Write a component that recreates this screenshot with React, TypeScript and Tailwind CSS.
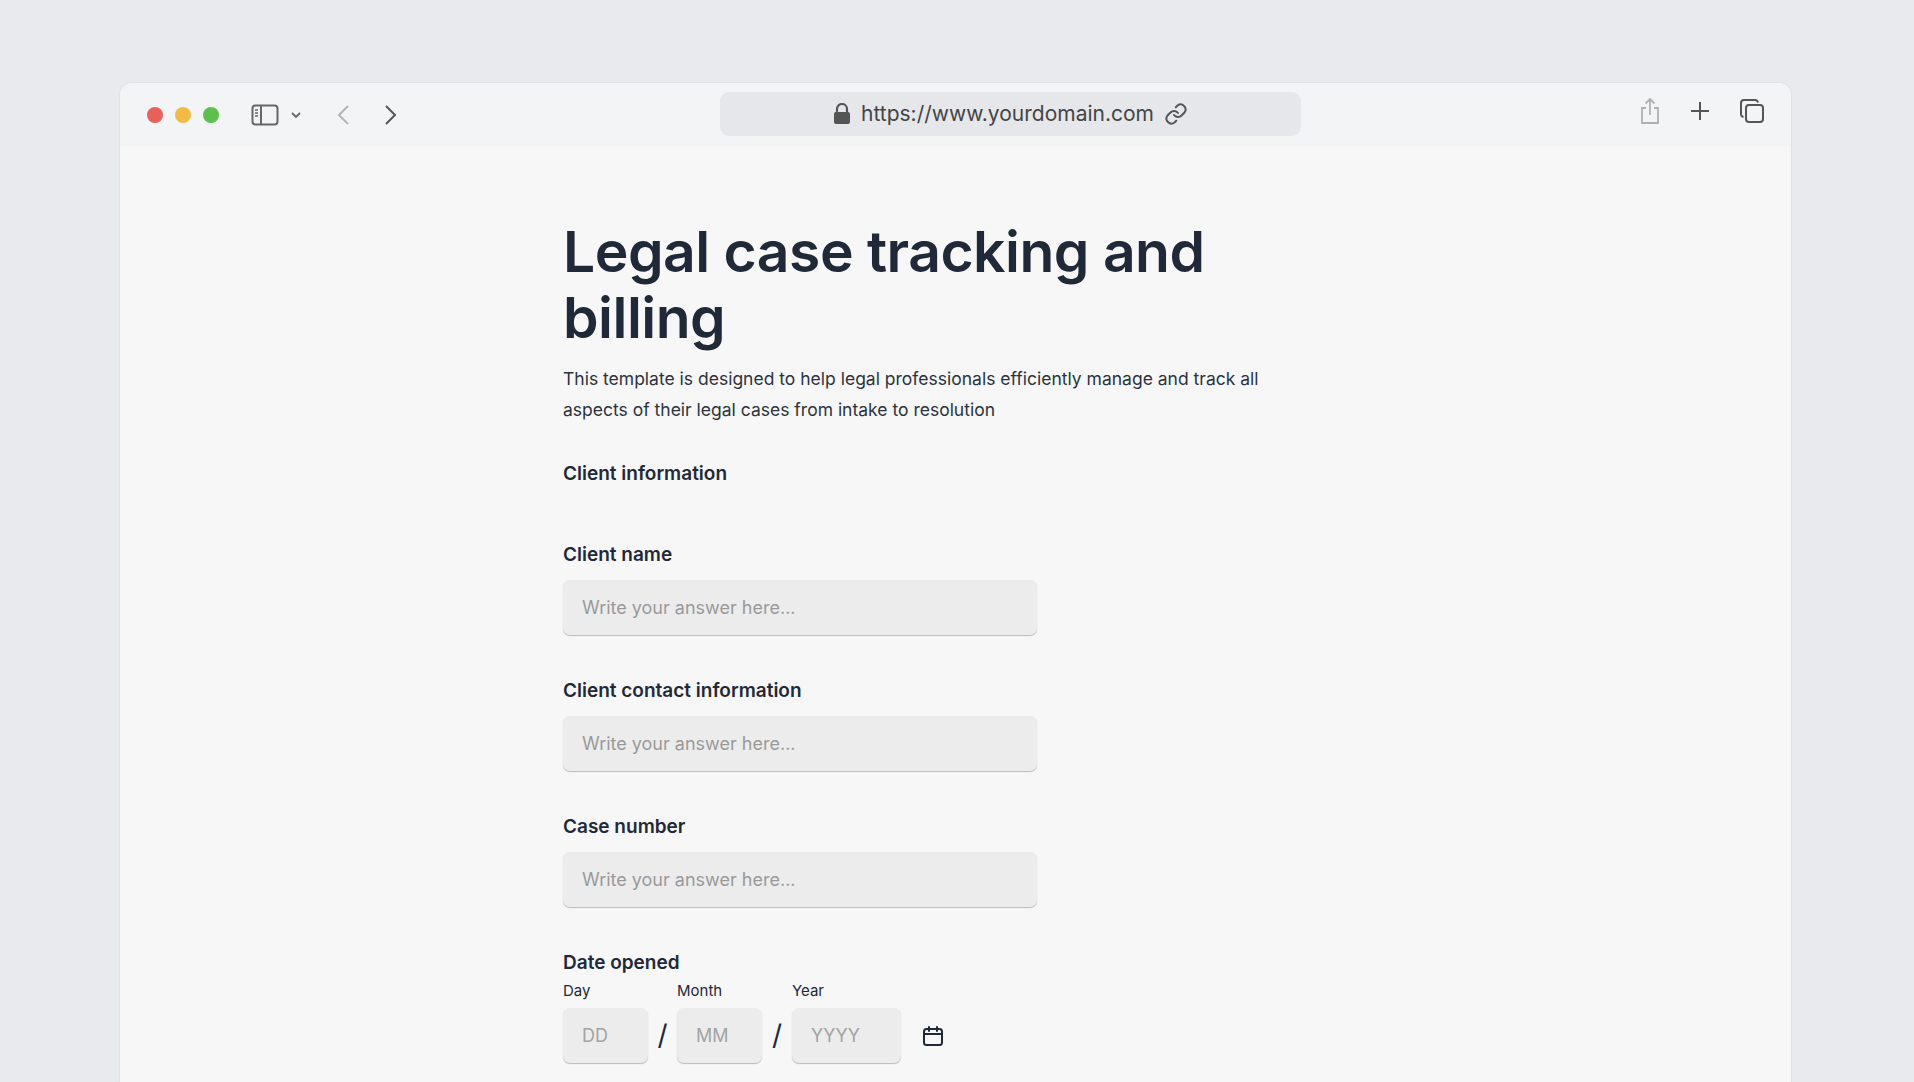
import React from "react";

const F = { fontFamily: "Inter, 'Noto Sans', sans-serif" };

function Field({ label }: { label: string }) {
  return (
    <div className="flex flex-col">
      <div className="text-[19px] font-semibold text-[#1f2937] leading-[24px]">{label}</div>
      <div className="mt-[13px] w-[474px] h-[55px] rounded-[7px] bg-[#ececec] shadow-[0_1px_1px_rgba(0,0,0,0.25)] flex items-center pl-[19px] text-[18px] text-[#9a9a9a]">
        Write your answer here...
      </div>
    </div>
  );
}

function DateBox({ label, ph, w }: { label: string; ph: string; w: string }) {
  return (
    <div className="flex flex-col">
      <div className="text-[15px] text-[#1f2937] leading-[20px] mb-[7px]">{label}</div>
      <div className={`${w} h-[55px] rounded-[7px] bg-[#ececec] shadow-[0_1px_1px_rgba(0,0,0,0.25)] flex items-center pl-[19px] text-[18px] text-[#a3a3a3]`}>
        {ph}
      </div>
    </div>
  );
}

export default function App() {
  return (
    <div style={F} className="w-[1914px] h-[1082px] bg-[#e9eaed] overflow-hidden pt-[83px] pl-[120px]">
      <div className="w-[1671px] h-[1000px] rounded-t-[12px] bg-[#f7f7f7] shadow-[0_0_2px_rgba(0,0,0,0.12)] overflow-hidden">
        <div className="h-[63px] bg-[#f3f4f6] flex items-center relative">
          <div className="flex items-center gap-[12px] ml-[27px]">
            <div className="w-[16px] h-[16px] rounded-full bg-[#e9605a]" />
            <div className="w-[16px] h-[16px] rounded-full bg-[#f2bb42]" />
            <div className="w-[16px] h-[16px] rounded-full bg-[#5bc04c]" />
          </div>
          <svg className="ml-[32px]" width="28" height="22" viewBox="0 0 28 22" fill="none" stroke="#666" strokeWidth="2">
            <rect x="1.5" y="1.5" width="25" height="19" rx="3" />
            <line x1="10" y1="1.5" x2="10" y2="20.5" />
            <line x1="4" y1="6" x2="7" y2="6" strokeWidth="1.5" />
            <line x1="4" y1="9" x2="7" y2="9" strokeWidth="1.5" />
            <line x1="4" y1="12" x2="7" y2="12" strokeWidth="1.5" />
          </svg>
          <svg className="ml-[10px]" width="14" height="14" viewBox="0 0 14 14" fill="none" stroke="#666" strokeWidth="1.8"><path d="M3 5l4 4 4-4" /></svg>
          <svg className="ml-[32px]" width="16" height="24" viewBox="0 0 16 24" fill="none" stroke="#b5b5b5" strokeWidth="2"><path d="M13 3L4 12l9 9" /></svg>
          <svg className="ml-[32px]" width="16" height="24" viewBox="0 0 16 24" fill="none" stroke="#555" strokeWidth="2"><path d="M3 3l9 9-9 9" /></svg>
          <div className="absolute left-[600px] top-[9px] w-[581px] h-[44px] rounded-[9px] bg-[#e6e7ea] flex items-center justify-center gap-[10px] text-[21px] text-[#444]">
            <svg width="18" height="22" viewBox="0 0 18 22"><path d="M4 9V6a5 5 0 0110 0v3" fill="none" stroke="#555" strokeWidth="2.2" /><rect x="1" y="9" width="16" height="12" rx="2" fill="#555" /></svg>
            <span>https://www.yourdomain.com</span>
            <svg width="24" height="24" viewBox="0 0 24 24" fill="none" stroke="#555" strokeWidth="2" strokeLinecap="round"><path d="M10 13a5 5 0 007.5.5l3-3a5 5 0 00-7-7l-1.7 1.7" /><path d="M14 11a5 5 0 00-7.5-.5l-3 3a5 5 0 007 7l1.7-1.7" /></svg>
          </div>
          <div className="absolute right-[26px] top-[14px] flex items-center gap-[28px]">
            <svg width="22" height="28" viewBox="0 0 22 28" fill="none" stroke="#b0b0b0" strokeWidth="1.8"><path d="M7 11H3v15h16V11h-4" /><path d="M11 18V2M6.5 6.5L11 2l4.5 4.5" /></svg>
            <svg width="22" height="22" viewBox="0 0 22 22" fill="none" stroke="#555" strokeWidth="2"><path d="M11 2v18M2 11h18" /></svg>
            <svg width="26" height="26" viewBox="0 0 26 26" fill="none" stroke="#555" strokeWidth="2"><rect x="7" y="7" width="17" height="17" rx="3" /><path d="M19 4.5A3 3 0 0016.5 2H5a3 3 0 00-3 3v11.5A3 3 0 004.5 19" /></svg>
          </div>
        </div>
        <div className="pl-[443px] pt-[73px] text-[#1f2937]">
          <h1 className="text-[57px] font-semibold leading-[66px] tracking-[-0.5px] w-[720px]">Legal case tracking and billing</h1>
          <p className="mt-[13px] text-[17.5px] leading-[30.5px] w-[740px] text-[#2b3340]">
            This template is designed to help legal professionals efficiently manage and track all aspects of their legal cases from intake to resolution
          </p>
          <div className="mt-[37px] text-[19px] font-semibold leading-[24px]">Client information</div>
          <div className="mt-[57px] flex flex-col gap-[44px]">
            <Field label="Client name" />
            <Field label="Client contact information" />
            <Field label="Case number" />
          </div>
          <div className="mt-[44px] text-[19px] font-semibold leading-[24px]">Date opened</div>
          <div className="mt-[6px] flex items-end">
            <DateBox label="Day" ph="DD" w="w-[85px]" />
            <span className="w-[29px] text-center text-[28px] leading-[55px] h-[55px]">/</span>
            <DateBox label="Month" ph="MM" w="w-[85px]" />
            <span className="w-[30px] text-center text-[28px] leading-[55px] h-[55px]">/</span>
            <DateBox label="Year" ph="YYYY" w="w-[109px]" />
            <svg className="ml-[20px] mb-[15px]" width="24" height="24" viewBox="0 0 24 24" fill="none" stroke="#1f2937" strokeWidth="2" strokeLinecap="round"><rect x="3" y="5" width="18" height="16" rx="2.5" /><path d="M3 10h18M8 3v4M16 3v4" /></svg>
          </div>
        </div>
      </div>
    </div>
  );
}
